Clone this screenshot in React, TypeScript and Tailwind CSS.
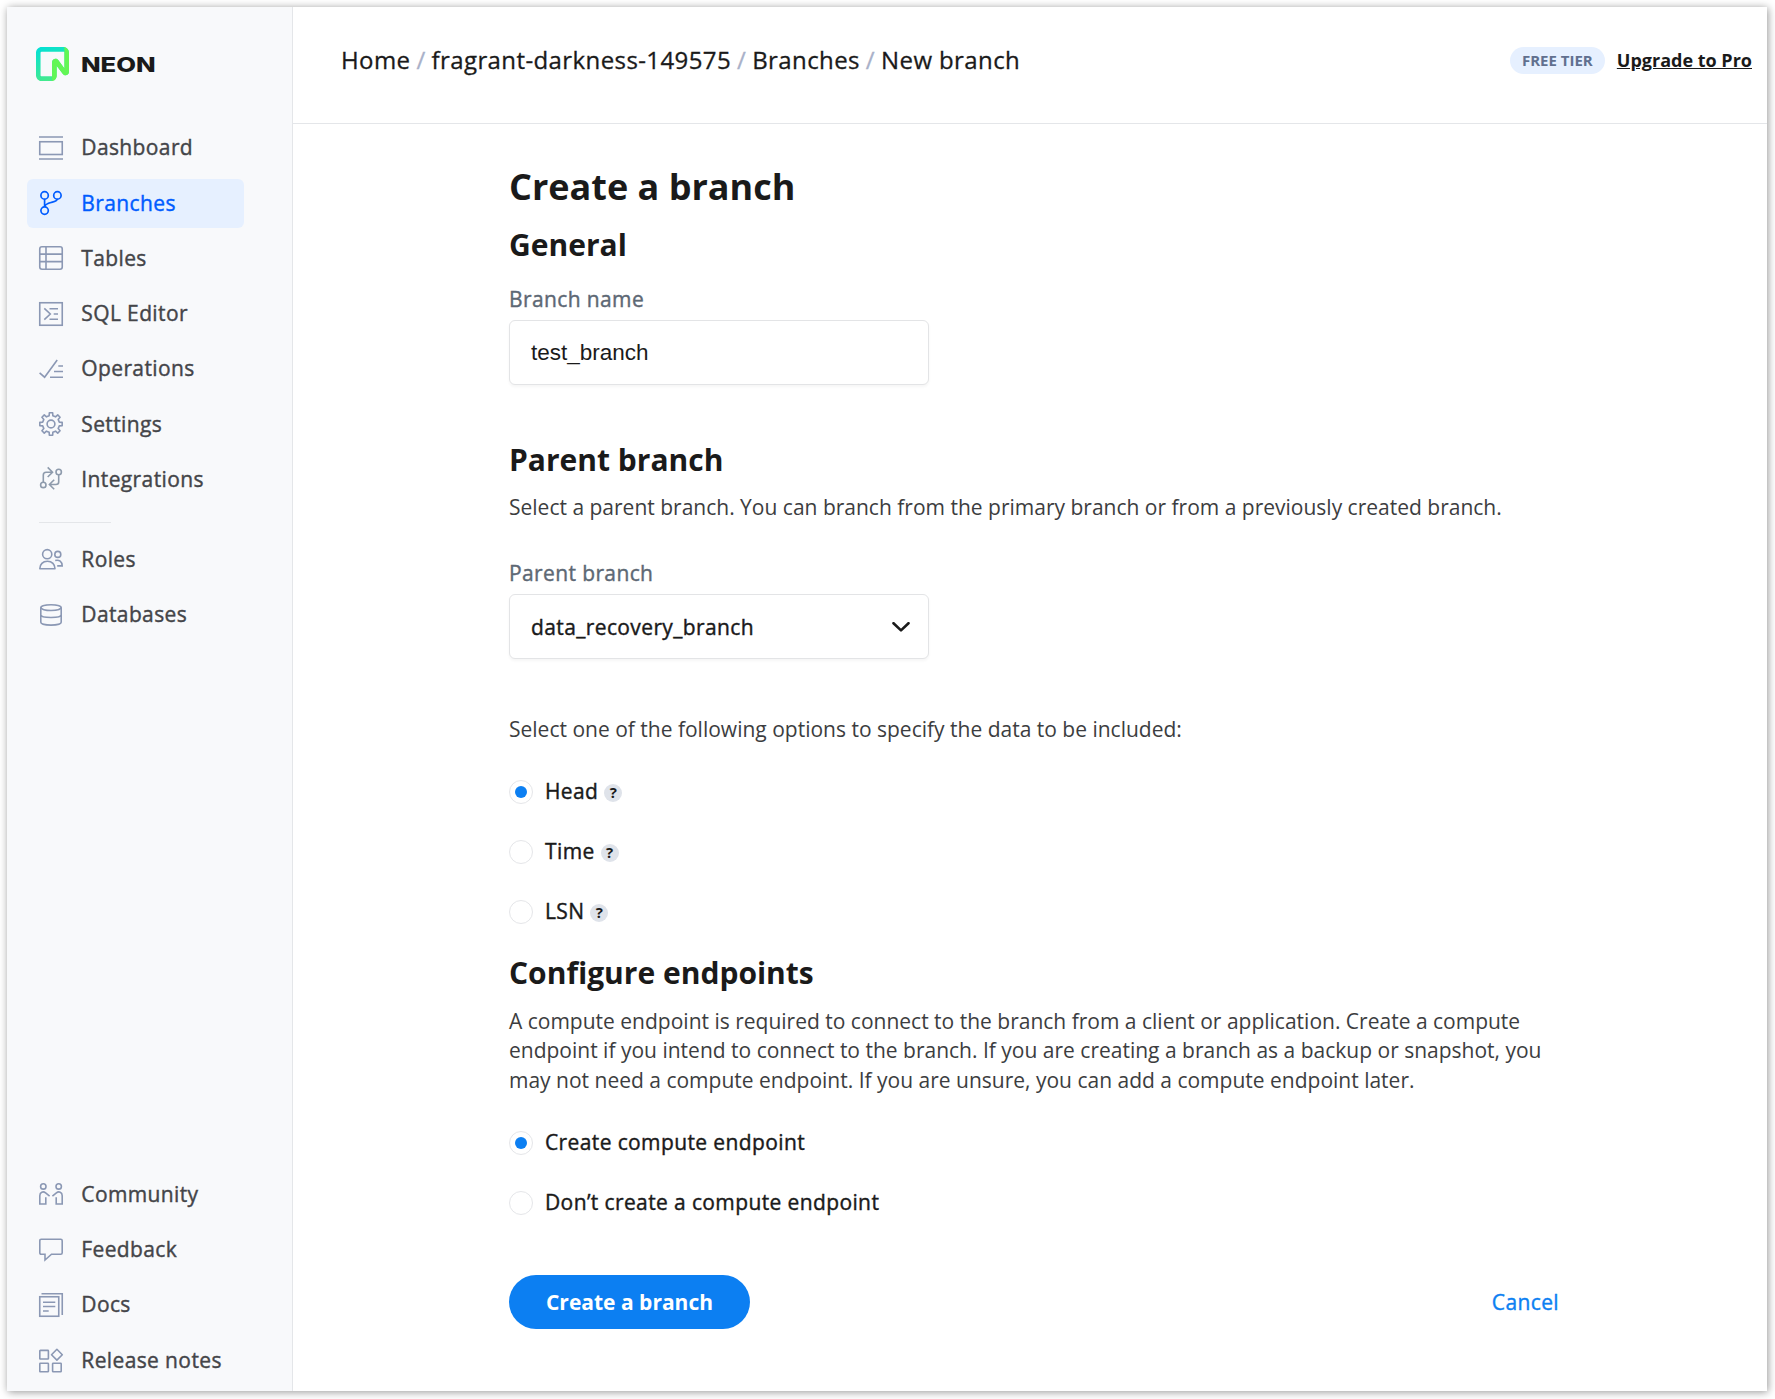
import type { ReactNode } from "react";

/* Medium-weight look for Open Sans regular. */
const MEDIUM = "tracking-[0.38px] [-webkit-text-stroke:0.4px_currentColor]";

function Icon({ children, className = "text-[#8b98b4]" }: { children: ReactNode; className?: string }) {
  return (
    <svg viewBox="0 0 24 24" width="24" height="24" fill="none" stroke="currentColor" strokeWidth="1.6" className={`shrink-0 overflow-visible ${className}`}>
      {children}
    </svg>
  );
}

function gearPath() {
  const points: string[] = [];
  for (let i = 0; i < 8; i++) {
    const base = i * 45;
    const corners: [number, number][] = [
      [8.5, base - 12.5],
      [11.3, base - 8.5],
      [11.3, base + 8.5],
      [8.5, base + 12.5],
    ];
    for (const [r, deg] of corners) {
      const a = (deg * Math.PI) / 180;
      points.push(`${(12 + r * Math.sin(a)).toFixed(2)} ${(12 - r * Math.cos(a)).toFixed(2)}`);
    }
  }
  return `M${points.join("L")}Z`;
}

const icons = {
  dashboard: (
    <Icon>
      <path d="M0 1h24M0 23h24" />
      <rect x=".75" y="5.75" width="22.5" height="12.75" />
    </Icon>
  ),
  branches: (
    <Icon className="text-[#005cff]">
      <g strokeWidth="1.7">
        <circle cx="5.6" cy="4.4" r="3.7" />
        <circle cx="18.4" cy="4.4" r="3.7" />
        <circle cx="5.6" cy="19.6" r="3.7" />
        <path d="M5.6 8.1v7.8M18.2 8.1C17.8 10.4 15.5 10.6 12 11.5C8.8 12.3 6.4 13 5.8 15.4" />
      </g>
    </Icon>
  ),
  tables: (
    <Icon>
      <rect x=".75" y=".75" width="22.5" height="22.5" rx="2.2" />
      <path d="M7 1v22M1 8.1h22M1 15.6h22" />
    </Icon>
  ),
  sql: (
    <Icon>
      <rect x=".75" y=".75" width="22.5" height="22.5" />
      <path d="M5.3 6.3l6 5.7-6 5.7M10.5 6.8H19M14.7 12H19M10.5 17.3H19" />
    </Icon>
  ),
  operations: (
    <Icon>
      <path d="M.6 15.8l5 4.4L18.2 3M19.3 9H24M15 14.5h9M11 20.2h13" />
    </Icon>
  ),
  settings: (
    <Icon>
      <path d={gearPath()} strokeLinejoin="round" />
      <circle cx="12" cy="12" r="3.9" />
    </Icon>
  ),
  integrations: (
    <Icon className="text-[#8e9bac]">
      <circle cx="4.3" cy="17.9" r="2.7" />
      <circle cx="19.7" cy="5" r="2.7" />
      <path d="M4.3 15.2V8q0-2.8 2.8-2.8h6M8.7.4l4.8 4.8-4.8 4.8M19.7 7.7V15q0 2.5-2.8 2.5h-6M15.2 12.7l-4.8 4.8 4.8 4.8" />
    </Icon>
  ),
  roles: (
    <Icon>
      <circle cx="8.2" cy="7.2" r="4.6" />
      <path d="M.8 21.7c0-4.3 3-7.5 7.6-7.5s7.6 3.2 7.6 7.5z" strokeLinejoin="round" />
      <circle cx="18.8" cy="7.4" r="3" />
      <path d="M16.2 13.5c4-1.1 7 1.2 7 5.4h-5" />
    </Icon>
  ),
  databases: (
    <Icon>
      <ellipse cx="12" cy="4.6" rx="10.2" ry="2.9" />
      <path d="M1.8 4.6v14.6c0 1.7 4.5 2.9 10.2 2.9s10.2-1.2 10.2-2.9V4.6M1.8 11.8c0 1.7 4.5 2.7 10.2 2.7s10.2-1 10.2-2.7" />
    </Icon>
  ),
  community: (
    <Icon>
      <circle cx="4.3" cy="3.4" r="2.7" />
      <path d="M10.6 13.2L6.6 9.9C4.2 8 .8 9 .8 12.8V21h6v-6.7" />
      <circle cx="19.7" cy="3.4" r="2.7" />
      <path d="M13.4 13.2l4-3.3c2.4-1.9 5.8-.9 5.8 2.9V21h-6v-6.7" />
    </Icon>
  ),
  feedback: (
    <Icon>
      <path d="M2.2 1.3h19.6q1.4 0 1.4 1.4v12.1q0 1.4-1.4 1.4h-9.3L6 22v-5.8H2.2q-1.4 0-1.4-1.4V2.7q0-1.4 1.4-1.4z" />
    </Icon>
  ),
  docs: (
    <Icon>
      <rect x=".75" y="3.75" width="19" height="19.5" />
      <path d="M2.5.75h20.75V22M4 9.2h12.3M4 13.5h12.3M4 18h5.7" />
    </Icon>
  ),
  release: (
    <Icon>
      <rect x=".8" y="1.4" width="8.6" height="8.6" rx=".6" />
      <rect x=".8" y="14.2" width="8.6" height="8.6" rx=".6" />
      <rect x="13.6" y="14.2" width="8.6" height="8.6" rx=".6" />
      <path d="M17.9.3l5.4 5.4-5.4 5.4-5.4-5.4z" strokeLinejoin="round" />
    </Icon>
  ),
};

function NavItem({ icon, label, active }: { icon: ReactNode; label: string; active?: boolean }) {
  return (
    <a className={`flex h-[49px] items-center gap-[18.3px] rounded-md pl-3 text-[21px] leading-7 ${MEDIUM} ${active ? "bg-[#e6f0ff] text-[#005cff]" : "text-[#444549]"}`}>
      {icon}
      <span className="-mt-px">{label}</span>
    </a>
  );
}

function Logo() {
  return (
    <div className="flex h-[34px] items-center gap-3 pl-[9px]">
      <svg viewBox="0 0 28.14 28" width="33" height="34" preserveAspectRatio="none" className="shrink-0">
        <defs>
          <linearGradient id="mark" x1="0" y1="0" x2=".35" y2="1">
            <stop offset="0" stopColor="#00e0d9" />
            <stop offset="1" stopColor="#45ea8c" />
          </linearGradient>
        </defs>
        <path
          fill="url(#mark)"
          d="M0 4.828C0 2.16 2.172 0 4.851 0h18.436c2.679 0 4.85 2.161 4.85 4.828V20.43c0 2.758-3.507 3.955-5.208 1.778l-5.319-6.809v8.256c0 2.4-1.955 4.345-4.367 4.345H4.851C2.172 28 0 25.839 0 23.172zm4.851-.965a.97.97 0 0 0-.97.965v18.344c0 .534.435.966.97.966h8.539c.268 0 .34-.216.34-.483v-11.07c0-2.76 3.507-3.956 5.208-1.779l5.319 6.809V4.828c0-.534.05-.965-.485-.965z"
        />
        <path
          fill="#63f655"
          d="M23.287 0c2.679 0 4.85 2.161 4.85 4.828V20.43c0 2.758-3.507 3.955-5.208 1.778l-5.319-6.809v8.256c0 2.4-1.954 4.345-4.366 4.345a.484.484 0 0 0 .485-.483V12.584c0-2.758 3.508-3.955 5.21-1.777l5.318 6.808V.965A.97.97 0 0 0 23.287 0"
        />
      </svg>
      <span className="mt-0.5 origin-left scale-x-[1.25] font-[Inter,sans-serif] text-[20.5px] leading-6 font-extrabold text-[#1a1a1a]">NEON</span>
    </div>
  );
}

function Radio({ label, checked, help }: { label: string; checked?: boolean; help?: boolean }) {
  return (
    <label className="flex h-6 items-center">
      <span className="flex size-6 items-center justify-center rounded-full border border-[#e5e6e9] bg-white">
        {checked && <span className="size-3 rounded-full bg-[#0c7ff2]" />}
      </span>
      <span className={`-mt-0.5 ml-3 text-[21px] leading-7 ${MEDIUM}`}>{label}</span>
      {help && (
        <span className="mt-0.5 ml-1.5 flex size-[18px] items-center justify-center rounded-full bg-[#dfe3ea] pb-px text-[15px] leading-none font-bold">?</span>
      )}
    </label>
  );
}

function Slash() {
  return <span className="mx-[-0.7px] text-[#a9b1c9]"> / </span>;
}

const heading = "text-[30px] leading-10 font-bold";
const fieldLabel = `block text-[21px] leading-7 text-[#5d6874] ${MEDIUM}`;
const field = "mt-[7px] flex h-[65px] w-[420px] items-center rounded-md border border-[#e3e4e6] bg-white pl-[21px] shadow-[0_2px_3px_rgba(0,0,0,0.04)]";

export default function App() {
  return (
    <div className="h-[1399px] w-[1775px] bg-white p-[7px] pr-2 pb-2 font-['Open_Sans',sans-serif] text-[#1a1a1a]">
      <div className="flex h-full bg-white shadow-[1px_1px_8px_rgba(0,0,0,0.42)]">
        <aside className="flex w-[286px] shrink-0 flex-col border-r border-[#e4e6e9] bg-[#f8f9fb] pt-10 pr-12 pb-[6px] pl-5">
          <Logo />
          <nav className="mt-[42.35px] flex flex-col gap-[6.25px]">
            <NavItem icon={icons.dashboard} label="Dashboard" />
            <NavItem icon={icons.branches} label="Branches" active />
            <NavItem icon={icons.tables} label="Tables" />
            <NavItem icon={icons.sql} label="SQL Editor" />
            <NavItem icon={icons.operations} label="Operations" />
            <NavItem icon={icons.settings} label="Settings" />
            <NavItem icon={icons.integrations} label="Integrations" />
          </nav>
          <hr className="mt-[18px] mb-3 ml-3 w-[72px] border-[#e4e6e9]" />
          <nav className="flex flex-col gap-[6.2px]">
            <NavItem icon={icons.roles} label="Roles" />
            <NavItem icon={icons.databases} label="Databases" />
          </nav>
          <nav className="mt-auto flex flex-col">
            <div className="flex flex-col gap-1.5 pb-[7px]">
              <NavItem icon={icons.community} label="Community" />
              <NavItem icon={icons.feedback} label="Feedback" />
              <NavItem icon={icons.docs} label="Docs" />
            </div>
            <NavItem icon={icons.release} label="Release notes" />
          </nav>
        </aside>

        <div className="flex grow flex-col">
          <header className="flex h-[117px] items-start justify-between border-b border-[#e4e6e9] pt-[37px] pr-[15px] pl-12">
            <div className="text-[24px] leading-8 tracking-[0.4px] whitespace-pre text-[#1a1a1a] [-webkit-text-stroke:0.3px_currentColor]">
              Home
              <Slash />
              fragrant-darkness-149575
              <Slash />
              Branches
              <Slash />
              New branch
            </div>
            <div className="mt-[3px] flex items-start gap-3">
              <span className="flex h-[27px] w-[95px] items-center justify-center rounded-full bg-[#e6f0ff] pb-0.5 text-[15px] leading-5 font-bold text-[#61708f]">FREE TIER</span>
              <a className="mt-px text-[18px] leading-6 font-bold underline">Upgrade to Pro</a>
            </div>
          </header>

          <main className="ml-[216px] w-[1050px]">
            <h1 className="mt-[39px] text-[36px] leading-[48px] font-bold">Create a branch</h1>
            <h2 className={`mt-[14px] ${heading}`}>General</h2>
            <label className={`mt-5 ${fieldLabel}`}>Branch name</label>
            <div className={`${field} font-['Liberation_Sans',sans-serif] text-[22.5px] leading-7`}>
              <span>test_branch</span>
            </div>

            <h2 className={`mt-[55px] ${heading}`}>Parent branch</h2>
            <p className="mt-3 text-[21px] leading-[30px] text-[#3c3d40]">
              Select a parent branch. You can branch from the primary branch or from a previously created branch.
            </p>
            <label className={`mt-[37px] ${fieldLabel}`}>Parent branch</label>
            <div className={`${field} justify-between pr-[18px] text-[21px] leading-7`}>
              <span className={MEDIUM}>data_recovery_branch</span>
              <svg viewBox="0 0 18 10" width="18" height="10" fill="none" stroke="currentColor" strokeWidth="2.6" strokeLinecap="round" strokeLinejoin="round">
                <path d="M1.5 1.2L9 8.4L16.5 1.2" />
              </svg>
            </div>
            <p className="mt-[55px] text-[21px] leading-[30px] text-[#3c3d40]">Select one of the following options to specify the data to be included:</p>
            <div className="mt-9 flex flex-col gap-9">
              <Radio label="Head" checked help />
              <Radio label="Time" help />
              <Radio label="LSN" help />
            </div>

            <h2 className={`mt-[29px] ${heading}`}>Configure endpoints</h2>
            <p className="mt-[13.5px] text-[21px] leading-[29.5px] text-[#3c3d40]">
              A compute endpoint is required to connect to the branch from a client or application. Create a compute endpoint if you intend to connect to the branch. If you are creating a branch as a backup or snapshot, you may not need a compute endpoint. If you are unsure, you can add a compute endpoint later.
            </p>
            <div className="mt-[35.5px] flex flex-col gap-9">
              <Radio label="Create compute endpoint" checked />
              <Radio label="Don’t create a compute endpoint" />
            </div>

            <div className="mt-[60px] flex items-center justify-between">
              <button className="h-[54px] w-[241px] rounded-full bg-[#0c7ff2] pt-px text-[21px] leading-7 font-bold text-white">Create a branch</button>
              <a className={`text-[21px] leading-7 text-[#0c7ff2] ${MEDIUM}`}>Cancel</a>
            </div>
          </main>
        </div>
      </div>
    </div>
  );
}
